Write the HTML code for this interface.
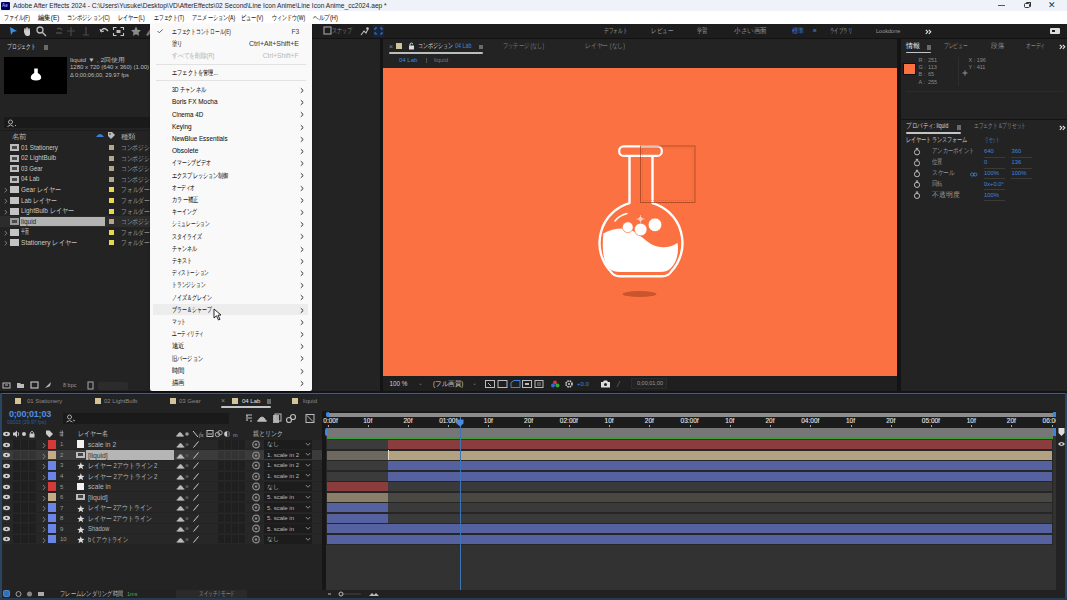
<!DOCTYPE html>
<html><head><meta charset="utf-8">
<style>
*{margin:0;padding:0;box-sizing:border-box}
html,body{width:1067px;height:600px;overflow:hidden;background:#121212;font-family:"Liberation Sans",sans-serif;font-size:7px;color:#a8a8a8}
.a{position:absolute}
.t{position:absolute;white-space:nowrap;line-height:1}
.panel{position:absolute;background:#232323}
.mb{position:absolute;white-space:nowrap;line-height:1;top:3px;font-size:7px;color:#111;-webkit-text-stroke:0.05px currentColor}
.ws{position:absolute;white-space:nowrap;line-height:1;top:4px;font-size:6.5px;color:#9a9a9a}
.mi{position:absolute;white-space:nowrap;line-height:1;left:21.5px;font-size:6.8px;color:#111;-webkit-text-stroke:0.05px currentColor}
.ar{position:absolute;left:150px;width:4px;height:7px}
.pr{position:absolute;white-space:nowrap;line-height:1;font-size:7.4px;color:#cacaca;margin-top:-0.4px}
.pt{position:absolute;white-space:nowrap;line-height:1;font-size:7px;color:#9a9a9a}
.lbl{position:absolute;width:5px;height:5px}
</style></head><body>
<!-- ================= title bar ================= -->
<div class="a" style="left:0;top:0;width:1067px;height:11px;background:#eff2f8">
  <div class="a" style="left:1px;top:2px;width:9px;height:8px;background:#00005b;border-radius:1px"></div>
  <div class="t" style="left:2px;top:4px;font-size:4.5px;color:#9999ff;font-weight:bold">Ae</div>
  <div class="t" style="left:13px;top:2px;font-size:7px;color:#1f1f1f;--w:374;transform:scaleX(0.942);transform-origin:0 0">Adobe After Effects 2024 - C:\Users\Yusuke\Desktop\VD\AfterEffects\02 Second\Line Icon Anime\Line Icon Anime_cc2024.aep *</div>
  <div class="a" style="left:998px;top:5px;width:7px;height:1px;background:#555"></div>
  <div class="a" style="left:1024px;top:2.5px;width:5.5px;height:5.5px;border:1px solid #333;border-radius:1.5px"></div><div class="a" style="left:1025.5px;top:1.5px;width:5px;height:5px;border-top:1px solid #333;border-right:1px solid #333;border-radius:1px"></div>
  <div class="t" style="left:1048px;top:1px;font-size:9px;color:#333">✕</div>
</div>
<!-- ================= menu bar ================= -->
<div class="a" style="left:0;top:11px;width:1067px;height:13px;background:#ffffff">
  <div class="mb" style="left:4px;--w:26;transform:scaleX(0.703);transform-origin:0 0">ファイル(F)</div>
  <div class="mb" style="left:38px;--w:21;transform:scaleX(0.913);transform-origin:0 0">編集(E)</div>
  <div class="mb" style="left:67px;--w:43;transform:scaleX(0.729);transform-origin:0 0">コンポジション(C)</div>
  <div class="mb" style="left:118px;--w:27;transform:scaleX(0.73);transform-origin:0 0">レイヤー(L)</div>
  <div class="mb" style="left:154px;--w:30;transform:scaleX(0.682);transform-origin:0 0">エフェクト(T)</div>
  <div class="mb" style="left:192px;--w:43;transform:scaleX(0.741);transform-origin:0 0">アニメーション(A)</div>
  <div class="mb" style="left:241px;--w:22;transform:scaleX(0.733);transform-origin:0 0">ビュー(V)</div>
  <div class="mb" style="left:272px;--w:33;transform:scaleX(0.717);transform-origin:0 0">ウィンドウ(W)</div>
  <div class="mb" style="left:313px;--w:25;transform:scaleX(0.806);transform-origin:0 0">ヘルプ(H)</div>
</div>
<!-- ================= toolbar ================= -->
<div class="a" style="left:0;top:24px;width:1067px;height:14px;background:#1d1d1d">
  <svg class="a" style="left:0;top:0" width="400" height="14">
    <path d="M10 3 L17 7 L13 8 L11 11 Z" fill="#3d8ee8"/>
    <path d="M24 8 q0-4 1-4 q1 0 1 3 q0-4 1-4 q1 0 1 4 q0-3 1-3 q1 0 1 3 v3 q0 2-3 2 q-2 0-3-4z" fill="#cfcfcf"/>
    <circle cx="40" cy="6" r="3" stroke="#bbb" stroke-width="1.3" fill="none"/><path d="M42 8 L46 12" stroke="#bbb" stroke-width="1.5"/>
    <path d="M56 9 h6 M57 5 q3-2 5 1" stroke="#4a4a4a" stroke-width="1.5" fill="none"/>
    <path d="M71 3 v9 M67 7 h8" stroke="#4a4a4a" stroke-width="1.2"/>
    <path d="M86 3 v8 M83 11 h6" stroke="#4a4a4a" stroke-width="1.2"/>
    <path d="M101 7 q3-5 7 0" stroke="#c8c8c8" stroke-width="1.4" fill="none"/><path d="M100 5 l1 3 l3-1" stroke="#c8c8c8" stroke-width="1" fill="none"/>
    <path d="M113.5 6 v-2.5 h3 M120.5 3.5 h3 v2.5 M113.5 9 v2.5 h3 M120.5 11.5 h3 v-2.5" stroke="#c8c8c8" stroke-width="1.1" fill="none"/><rect x="116.5" y="6" width="4" height="3" fill="#bbb"/>
    <path d="M136 2.5 l1.6 3.2 l3.4 0.5 l-2.5 2.3 l0.6 3.3 l-3.1-1.6 l-3.1 1.6 l0.6-3.3 l-2.5-2.3 l3.4-0.5z" fill="#8a8a8a"/>
    <path d="M146 11 l4-6 l2 2 l-4 5z" fill="#777"/>
    <rect x="324" y="3" width="7" height="7" fill="none" stroke="#9a9a9a" stroke-width="1.2"/>
    <path d="M361 11 l3-4 l2 2 l2-4" stroke="#bbb" stroke-width="1.1" fill="none"/><circle cx="367.5" cy="4.5" r="1.3" fill="#ccc"/>
    <rect x="373" y="1" width="11" height="12" fill="#18243a"/><path d="M375 4 h2 M375 4 v2 M382 4 h-2 M382 4 v2 M375 10 h2 M375 10 v-2 M382 10 h-2 M382 10 v-2" stroke="#3c7ad0" stroke-width="1"/>
  </svg>
  <div class="t" style="left:332px;top:4px;font-size:6.5px;color:#8a8a8a;--w:20;transform:scaleX(0.714);transform-origin:0 0">スナップ</div>
  <div class="ws" style="left:603.5px;--w:23.5;transform:scaleX(0.671);transform-origin:0 0">デフォルト</div>
  <div class="ws" style="left:651px;--w:22;transform:scaleX(0.786);transform-origin:0 0">レビュー</div>
  <div class="ws" style="left:696.5px;--w:10.5;transform:scaleX(0.75);transform-origin:0 0">学習</div>
  <div class="ws" style="left:733.5px;--w:32.5;transform:scaleX(0.929);transform-origin:0 0">小さい画面</div>
  <div class="ws" style="left:792px;color:#3e86dc;--w:12;transform:scaleX(0.857);transform-origin:0 0">標準</div>
  <div class="ws" style="left:813px;color:#3e86dc">≡</div>
  <div class="ws" style="left:830px;--w:22;transform:scaleX(0.629);transform-origin:0 0">ライブラリ</div>
  <div class="ws" style="left:876px;font-size:6px;--w:24;transform:scaleX(0.923);transform-origin:0 0">Lookdone</div>
  <svg class="a" style="left:924.5px;top:4.5px" width="7" height="6"><path d="M0.8 0.8 L2.8 2.8 L0.8 4.8 M3.8 0.8 L5.8 2.8 L3.8 4.8" fill="none" stroke="#e6e6e6" stroke-width="1.1"/></svg>
  <div class="a" style="left:1050px;top:4px;width:10px;height:6px;background:#ddd;border-radius:1px"></div>
  <div class="a" style="left:1052px;top:6px;width:3px;height:2px;background:#1d1d1d"></div>
</div>
<!-- ================= project panel ================= -->
<div class="panel" style="left:0;top:39px;width:380px;height:352px">
  <div class="t" style="left:7px;top:4px;font-size:7px;color:#dadada;--w:29;transform:scaleX(0.69);transform-origin:0 0">プロジェクト</div>
  <div class="a" style="left:43.5px;top:6px;width:4.5px;height:4.5px;background:#6a6a6a"></div>
  <div class="a" style="left:4px;top:18px;width:63px;height:37px;background:#000"></div>
  <svg class="a" style="left:30px;top:28px" width="12" height="15"><path d="M5.2 1.5 h2.6 v4.5 q3.4 1.6 3.4 4.6 q0 3-5.2 3 q-5.2 0-5.2-3 q0-3 3.4-4.6 v-4.5z" fill="#fff"/></svg>
  <div class="t" style="left:70px;top:18px;font-size:6px;color:#bdbdbd;--w:55;transform:scaleX(1.146);transform-origin:0 0">liquid ▼ , 2回使用</div>
  <div class="t" style="left:70px;top:25px;font-size:6px;color:#bdbdbd">1280 x 720 (640 x 360) (1.00)</div>
  <div class="t" style="left:70px;top:33px;font-size:6px;color:#bdbdbd;--w:59;transform:scaleX(0.952);transform-origin:0 0">Δ 0;00;06;00, 29.97 fps</div>
  <div class="a" style="left:4px;top:78px;width:146px;height:11px;background:#1a1a1a"></div>
  <svg class="a" style="left:7px;top:80px" width="10" height="8"><circle cx="3.5" cy="3" r="2" fill="none" stroke="#aaa" stroke-width="1"/><path d="M0.5 7.5 q3-3 6 0" fill="none" stroke="#aaa" stroke-width="1"/><path d="M8 6 l1 1" stroke="#aaa"/></svg>
  <div class="a" style="left:0;top:91px;width:150px;height:1px;background:#1c1c1c"></div>
  <div class="t" style="left:12px;top:94px;font-size:7px;color:#b8b8b8;--w:15;transform:scaleX(1.071);transform-origin:0 0">名前</div>
  <svg class="a" style="left:96px;top:93px" width="8" height="6"><path d="M0 5 q4-6 8 0z" fill="#3a80d8"/></svg>
  <svg class="a" style="left:107px;top:92px" width="9" height="9"><path d="M1 1 h4 l3 3 l-4 4 l-3-3z" fill="#bbb"/><circle cx="3" cy="3" r="0.8" fill="#232323"/></svg>
  <div class="t" style="left:121px;top:94px;font-size:7px;color:#b8b8b8;--w:15;transform:scaleX(1.071);transform-origin:0 0">種類</div>
</div>
<div class="a" style="left:380px;top:39px;width:3px;height:352px;background:#141414"></div>
<!-- project rows -->
<div class="a" style="left:0;top:143px;width:150px;height:110px">
  <!-- row pitch 10.6 -->
  <div class="a" style="left:10px;top:1px;width:9px;height:7px;background:#bdbdbd"></div><div class="a" style="left:12px;top:3px;width:5px;height:3px;background:#4b4b4b"></div>
  <div class="pr" style="left:21px;top:1px;--w:37.3;transform:scaleX(0.848);transform-origin:0 0">01 Stationery</div>
  <div class="lbl" style="left:109px;top:2px;background:#b8a488"></div><div class="pt" style="left:121px;top:1px;--w:40;transform:scaleX(0.816);transform-origin:0 0">コンポジション</div>

  <div class="a" style="left:10px;top:11.6px;width:9px;height:7px;background:#bdbdbd"></div><div class="a" style="left:12px;top:13.6px;width:5px;height:3px;background:#4b4b4b"></div>
  <div class="pr" style="left:21px;top:11.6px;--w:35.0;transform:scaleX(0.854);transform-origin:0 0">02 LightBulb</div>
  <div class="lbl" style="left:109px;top:12.6px;background:#b8a488"></div><div class="pt" style="left:121px;top:11.6px;--w:40;transform:scaleX(0.816);transform-origin:0 0">コンポジション</div>

  <div class="a" style="left:10px;top:22.2px;width:9px;height:7px;background:#bdbdbd"></div><div class="a" style="left:12px;top:24.2px;width:5px;height:3px;background:#4b4b4b"></div>
  <div class="pr" style="left:21px;top:22.2px;--w:21.7;transform:scaleX(0.804);transform-origin:0 0">03 Gear</div>
  <div class="lbl" style="left:109px;top:23.2px;background:#b8a488"></div><div class="pt" style="left:121px;top:22.2px;--w:40;transform:scaleX(0.816);transform-origin:0 0">コンポジション</div>

  <div class="a" style="left:10px;top:32.8px;width:9px;height:7px;background:#bdbdbd"></div><div class="a" style="left:12px;top:34.8px;width:5px;height:3px;background:#4b4b4b"></div>
  <div class="pr" style="left:21px;top:32.8px;--w:18.6;transform:scaleX(0.809);transform-origin:0 0">04 Lab</div>
  <div class="lbl" style="left:109px;top:33.8px;background:#b8a488"></div><div class="pt" style="left:121px;top:32.8px;--w:40;transform:scaleX(0.816);transform-origin:0 0">コンポジション</div>

  <svg class="a" style="left:3.5px;top:44.4px" width="4" height="7"><path d="M0.8 1 L2.8 3.2 L0.8 5.4" fill="none" stroke="#8a8a8a" stroke-width="0.9"/></svg>
  <div class="a" style="left:10px;top:43.4px;width:9px;height:7px;background:#c4c4c4"></div>
  <div class="pr" style="left:21px;top:43.4px;--w:40.0;transform:scaleX(0.87);transform-origin:0 0">Gear レイヤー</div>
  <div class="lbl" style="left:109px;top:44.4px;background:#e8d84a"></div><div class="pt" style="left:121px;top:43.4px;--w:29;transform:scaleX(0.829);transform-origin:0 0">フォルダー</div>

  <svg class="a" style="left:3.5px;top:55.0px" width="4" height="7"><path d="M0.8 1 L2.8 3.2 L0.8 5.4" fill="none" stroke="#8a8a8a" stroke-width="0.9"/></svg>
  <div class="a" style="left:10px;top:54px;width:9px;height:7px;background:#c4c4c4"></div>
  <div class="pr" style="left:21px;top:54px;--w:35.4;transform:scaleX(0.843);transform-origin:0 0">Lab レイヤー</div>
  <div class="lbl" style="left:109px;top:55px;background:#e8d84a"></div><div class="pt" style="left:121px;top:54px;--w:29;transform:scaleX(0.829);transform-origin:0 0">フォルダー</div>

  <svg class="a" style="left:3.5px;top:65.6px" width="4" height="7"><path d="M0.8 1 L2.8 3.2 L0.8 5.4" fill="none" stroke="#8a8a8a" stroke-width="0.9"/></svg>
  <div class="a" style="left:10px;top:64.6px;width:9px;height:7px;background:#c4c4c4"></div>
  <div class="pr" style="left:21px;top:64.6px;--w:53.0;transform:scaleX(0.869);transform-origin:0 0">LightBulb レイヤー</div>
  <div class="lbl" style="left:109px;top:65.6px;background:#e8d84a"></div><div class="pt" style="left:121px;top:64.6px;--w:29;transform:scaleX(0.829);transform-origin:0 0">フォルダー</div>

  <div class="a" style="left:0;top:73.2px;width:150px;height:10.6px;background:#2c2c2c"></div>
  <div class="a" style="left:20px;top:73.5px;width:85px;height:9.5px;background:#b3b3b3"></div>
  <div class="a" style="left:10px;top:75.2px;width:9px;height:7px;background:#9a9a9a"></div><div class="a" style="left:12px;top:77.2px;width:5px;height:3px;background:#4b4b4b"></div>
  <div class="pr" style="left:21px;top:75.2px;color:#222;--w:15.0;transform:scaleX(0.882);transform-origin:0 0">liquid</div>
  <div class="lbl" style="left:109px;top:76.2px;background:#b8a488"></div><div class="pt" style="left:121px;top:75.2px;--w:40;transform:scaleX(0.816);transform-origin:0 0">コンポジション</div>

  <svg class="a" style="left:3.5px;top:86.8px" width="4" height="7"><path d="M0.8 1 L2.8 3.2 L0.8 5.4" fill="none" stroke="#8a8a8a" stroke-width="0.9"/></svg>
  <div class="a" style="left:10px;top:85.8px;width:9px;height:7px;background:#c4c4c4"></div>
  <div class="pr" style="left:21px;top:85.8px;--w:7.7;transform:scaleX(0.55);transform-origin:0 0">平面</div>
  <div class="lbl" style="left:109px;top:86.8px;background:#e8d84a"></div><div class="pt" style="left:121px;top:85.8px;--w:29;transform:scaleX(0.829);transform-origin:0 0">フォルダー</div>

  <svg class="a" style="left:3.5px;top:97.4px" width="4" height="7"><path d="M0.8 1 L2.8 3.2 L0.8 5.4" fill="none" stroke="#8a8a8a" stroke-width="0.9"/></svg>
  <div class="a" style="left:10px;top:96.4px;width:9px;height:7px;background:#c4c4c4"></div>
  <div class="pr" style="left:21px;top:96.4px;--w:56.0;transform:scaleX(0.889);transform-origin:0 0">Stationery レイヤー</div>
  <div class="lbl" style="left:109px;top:97.4px;background:#e8d84a"></div><div class="pt" style="left:121px;top:96.4px;--w:29;transform:scaleX(0.829);transform-origin:0 0">フォルダー</div>
</div>
<!-- project footer -->
<div class="a" style="left:0;top:380px;width:150px;height:11px">
  <svg class="a" style="left:0;top:0" width="150" height="11">
    <rect x="3" y="3" width="7" height="5" fill="none" stroke="#bbb" stroke-width="1"/><path d="M5 5 h3" stroke="#bbb"/>
    <path d="M17 3 h3 l1 1 h3 v4 h-7z" fill="#bbb"/>
    <rect x="31" y="2" width="7" height="6" fill="none" stroke="#bbb" stroke-width="1.2"/>
    <path d="M45 8 l6-6 l-1 4 l-2 1z" fill="#bbb"/>
    <rect x="88" y="2" width="5" height="7" fill="none" stroke="#aaa" stroke-width="1"/>
    <rect x="98" y="2" width="30" height="8" rx="2" fill="#2c2c2c"/>
  </svg>
  <div class="t" style="left:63px;top:3px;font-size:5.5px;color:#999">8 bpc</div>
</div>
<!-- ================= comp panel ================= -->
<div class="panel" style="left:383px;top:39px;width:515px;height:352px">
  <div class="t" style="left:6px;top:4px;font-size:7px;color:#888">×</div>
  <div class="a" style="left:13px;top:4px;width:6px;height:6px;background:#cfc49a"></div>
  <svg class="a" style="left:25px;top:3px" width="7" height="8"><rect x="1" y="3.5" width="5" height="4" fill="#ddd"/><path d="M2 3.5 v-1.5 q1.5-2 3 0" fill="none" stroke="#ddd" stroke-width="1"/></svg>
  <div class="t" style="left:35px;top:4px;font-size:6.8px;color:#d8d8d8;--w:35;transform:scaleX(0.714);transform-origin:0 0">コンポジション</div>
  <div class="t" style="left:72px;top:4px;font-size:6.5px;color:#3e86dc;--w:16.5;transform:scaleX(0.825);transform-origin:0 0">04 Lab</div>
  <div class="a" style="left:96px;top:6px;width:4px;height:4px;background:#6a6a6a"></div>
  <div class="a" style="left:6px;top:13px;width:94px;height:2px;background:#bdbdbd;border-radius:1px"></div>
  <div class="t" style="left:120px;top:4px;font-size:6.5px;color:#7a7a7a;--w:41;transform:scaleX(0.745);transform-origin:0 0">フッテージ (なし)</div>
  <div class="t" style="left:202px;top:4px;font-size:6.5px;color:#7a7a7a;--w:40;transform:scaleX(0.833);transform-origin:0 0">レイヤー (なし)</div>
  
  <div class="t" style="left:16px;top:18px;font-size:6px;color:#3e86dc">04 Lab</div>
  <div class="a" style="left:42.5px;top:18.5px;width:1px;height:5px;background:#555"></div>
  <div class="t" style="left:51px;top:18px;font-size:6px;color:#777">liquid</div>
</div>
<div class="a" style="left:383px;top:68px;width:514px;height:308px;background:#fb7141">
  <svg class="a" style="left:0;top:0" width="514" height="308" viewBox="383 68 514 308">
    <!-- shadow -->
    <ellipse cx="639.5" cy="294" rx="17" ry="3" fill="#c9552a"/>
    <!-- liquid -->
    <path d="M603.3 233.5 C609 230 617 228 625 228.5 C635 229.5 642 238 651 244 C660 249 670 248 677.5 243 C679 252 677 262 671 268 C668 271 664 272 660 272 H620 C616 272 612 271 609 268 C603 262 602 250 603.3 233.5 Z" fill="#fff"/>
    <!-- bubbles -->
    <circle cx="627.8" cy="227.2" r="5.4" fill="#fff" stroke="#fb7141" stroke-width="0.7"/>
    <circle cx="655" cy="224.8" r="6.8" fill="#fff" stroke="#fb7141" stroke-width="0.7"/>
    <circle cx="640.7" cy="229.5" r="6.3" fill="#fff" stroke="#fb7141" stroke-width="0.7"/>
    <!-- anchor -->
    <circle cx="640.5" cy="219" r="1.6" fill="none" stroke="#fff" stroke-width="0.8"/>
    <path d="M640.5 215 v8 M636.5 219 h8" stroke="#fff" stroke-width="0.5"/>
    <!-- highlight arc -->
    <path d="M615 221 Q619 215.5 627 213.5" fill="none" stroke="#fff" stroke-width="1.5" stroke-linecap="round"/>
    <!-- flask outline -->
    <path d="M629.5 156.5 V203.1 A41.6 41.6 0 0 0 610.3 271 Q613.5 276.3 620 276.3 H662 Q668.5 276.3 671.7 271 A41.6 41.6 0 0 0 652.5 203.1 V156.5" fill="none" stroke="#fff" stroke-width="2.4" stroke-linejoin="round"/>
    <rect x="619.2" y="146.3" width="42.6" height="9.6" rx="4.5" fill="none" stroke="#fff" stroke-width="2.2"/>
    <!-- bounding box overlay -->
    <rect x="640.5" y="146" width="54.5" height="56.5" fill="none" stroke="#8a3618" stroke-width="0.7" opacity="0.85"/>
    <rect x="642.5" y="148" width="50.5" height="52.5" fill="none" stroke="#b0502c" stroke-width="0.5" stroke-dasharray="1 1" opacity="0.7"/>
  </svg>
</div>
<!-- comp footer -->
<div class="a" style="left:383px;top:376px;width:515px;height:15px;background:#1f1f1f">
  <div class="t" style="left:6.5px;top:5px;font-size:6.3px;color:#d0d0d0">100 %</div>
  <div class="t" style="left:35px;top:4px;font-size:6px;color:#777">⌄</div>
  <div class="t" style="left:50px;top:5px;font-size:6.5px;color:#d0d0d0;--w:30;transform:scaleX(0.938);transform-origin:0 0">(フル画質)</div>
  <div class="t" style="left:89px;top:4px;font-size:6px;color:#777">⌄</div>
  <svg class="a" style="left:0;top:0" width="300" height="15">
    <rect x="102.5" y="4.5" width="9" height="7" fill="none" stroke="#bbb" stroke-width="1"/><path d="M105 7 l3 3" stroke="#bbb"/>
    <rect x="115" y="4.5" width="9" height="7" fill="none" stroke="#bbb" stroke-width="1"/>
    <path d="M128 11.5 v-5 l3-2 h6 v7z" fill="none" stroke="#3e86dc" stroke-width="1"/>
    <rect x="139.5" y="4.5" width="9" height="7" fill="none" stroke="#bbb" stroke-width="1"/><rect x="142" y="7" width="4" height="2" fill="#bbb"/>
    <rect x="152" y="4.5" width="8" height="7" fill="none" stroke="#bbb" stroke-width="1"/><path d="M154 7 h4 M154 9 h4" stroke="#bbb" stroke-width="0.7"/>
    <circle cx="172" cy="6.5" r="2" fill="#d33"/><circle cx="174.5" cy="9.5" r="2" fill="#3a3"/><circle cx="170" cy="9.5" r="2" fill="#36d"/>
    <circle cx="186" cy="8" r="3" fill="none" stroke="#ccc" stroke-width="1.6" stroke-dasharray="1.6 0.8"/><circle cx="186" cy="8" r="1" fill="#ccc"/>
    <path d="M218 6 h2 l1-1.5 h3 l1 1.5 h2 v5.5 h-9z" fill="#ddd"/><circle cx="222.5" cy="8.5" r="1.5" fill="#1f1f1f"/>
    <path d="M234 11 l3-6" stroke="#555" stroke-width="1"/>
  </svg>
  <div class="t" style="left:194px;top:5px;font-size:6px;color:#3e86dc">+0.0</div>
  <div class="a" style="left:248px;top:2px;width:36px;height:11px;background:#232323;border:1px solid #2c2c2c"></div>
  <div class="t" style="left:254px;top:5px;font-size:5.5px;color:#999">0;00;01;00</div>
</div>
<div class="a" style="left:897px;top:39px;width:4px;height:352px;background:#141414"></div>
<!-- ================= right panels ================= -->
<div class="panel" style="left:901px;top:39px;width:166px;height:80px">
  <div class="t" style="left:5px;top:4px;font-size:6.8px;color:#e8e8e8;--w:14;transform:scaleX(1);transform-origin:0 0">情報</div>
  <div class="a" style="left:25.5px;top:6px;width:4.5px;height:4.5px;background:#6a6a6a"></div>
  <div class="a" style="left:5px;top:12.5px;width:25px;height:1.6px;background:#c4c4c4;border-radius:1px"></div>
  <div class="t" style="left:43px;top:4px;font-size:6.5px;color:#8a8a8a;--w:23.5;transform:scaleX(0.671);transform-origin:0 0">プレビュー</div>
  <div class="t" style="left:90px;top:4px;font-size:6.5px;color:#8a8a8a;--w:13;transform:scaleX(0.929);transform-origin:0 0">段落</div>
  <div class="t" style="left:125px;top:4px;font-size:6.5px;color:#8a8a8a;--w:19;transform:scaleX(0.679);transform-origin:0 0">オーディ</div>
  <svg class="a" style="left:157.5px;top:5px" width="7" height="6"><path d="M0.8 0.8 L2.8 2.8 L0.8 4.8 M3.8 0.8 L5.8 2.8 L3.8 4.8" fill="none" stroke="#e6e6e6" stroke-width="1.1"/></svg>
  <div class="a" style="left:3px;top:24.5px;width:11px;height:10.5px;background:#fb7141;box-shadow:0 0 0 1px #111"></div>
  <div class="t" style="left:17.5px;top:18px;font-size:5.5px;color:#8a8a8a;line-height:7.2px;white-space:pre">R :
G :
B :
A :</div>
  <div class="t" style="left:27px;top:18px;font-size:5.5px;color:#8a8a8a;line-height:7.2px;white-space:pre">251
113
65
255</div>
  <div class="a" style="left:57px;top:18px;width:1px;height:29px;background:#2e2e2e"></div>
  <div class="t" style="left:67.5px;top:18px;font-size:5.5px;color:#8a8a8a;line-height:7.2px;white-space:pre">X : 196
Y : 411</div>
  <svg class="a" style="left:61px;top:31px" width="6" height="6"><path d="M3 0.5 v5 M0.5 3 h5" stroke="#aaa" stroke-width="0.8"/></svg>
  <div class="a" style="left:5px;top:51.5px;width:157px;height:1px;background:#2c2c2c"></div>
</div>
<div class="a" style="left:901px;top:119px;width:166px;height:1px;background:#141414"></div>
<div class="panel" style="left:901px;top:120px;width:166px;height:271px">
  <div class="t" style="left:5px;top:3px;font-size:6.5px;color:#d8d8d8;--w:42.5;transform:scaleX(0.787);transform-origin:0 0">プロパティ: liquid</div>
  <div class="a" style="left:55.5px;top:5px;width:4.5px;height:4.5px;background:#6a6a6a"></div>
  <div class="a" style="left:5px;top:12px;width:55px;height:1.6px;background:#c4c4c4;border-radius:1px"></div>
  <div class="t" style="left:73px;top:3px;font-size:6.5px;color:#8a8a8a;--w:52;transform:scaleX(0.675);transform-origin:0 0">エフェクト＆プリセット</div>
  <svg class="a" style="left:157.5px;top:4.5px" width="7" height="6"><path d="M0.8 0.8 L2.8 2.8 L0.8 4.8 M3.8 0.8 L5.8 2.8 L3.8 4.8" fill="none" stroke="#e6e6e6" stroke-width="1.1"/></svg>
  <div class="t" style="left:5px;top:17px;font-size:6.8px;color:#cfcfcf;--w:61.5;transform:scaleX(0.732);transform-origin:0 0">レイヤートランスフォーム</div>
  <div class="t" style="left:83.5px;top:17px;font-size:6.5px;color:#3e86dc;--w:14.5;transform:scaleX(0.518);transform-origin:0 0">リセット</div>
  <svg class="a" style="left:0;top:0" width="30" height="90">
    <g fill="none" stroke="#c8c8c8" stroke-width="0.9">
      <circle cx="16" cy="32.3" r="2.6"/><path d="M16 29.7 v-1.2 M14.8 28.4 h2.4"/>
      <circle cx="16" cy="43.3" r="2.6"/><path d="M16 40.7 v-1.2 M14.8 39.4 h2.4"/>
      <circle cx="16" cy="54.2" r="2.6"/><path d="M16 51.6 v-1.2 M14.8 50.3 h2.4"/>
      <circle cx="16" cy="64.9" r="2.6"/><path d="M16 62.3 v-1.2 M14.8 61 h2.4"/>
      <circle cx="16" cy="75.9" r="2.6"/><path d="M16 73.3 v-1.2 M14.8 72 h2.4"/>
    </g>
  </svg>
  <div class="t" style="left:31px;top:28.3px;font-size:6.5px;color:#9a9a9a;--w:42;transform:scaleX(0.75);transform-origin:0 0">アンカーポイント</div>
  <div class="t" style="left:31px;top:39.3px;font-size:6.5px;color:#9a9a9a;--w:10.5;transform:scaleX(0.75);transform-origin:0 0">位置</div>
  <div class="t" style="left:31px;top:50.2px;font-size:6.5px;color:#9a9a9a;--w:23;transform:scaleX(0.821);transform-origin:0 0">スケール</div>
  <div class="t" style="left:31px;top:60.9px;font-size:6.5px;color:#9a9a9a;--w:10.5;transform:scaleX(0.75);transform-origin:0 0">回転</div>
  <div class="t" style="left:31px;top:71.9px;font-size:6.5px;color:#9a9a9a;--w:27.5;transform:scaleX(0.982);transform-origin:0 0">不透明度</div>
  <div class="t" style="left:83px;top:29px;font-size:5.8px;color:#3e86dc">640</div>
  <div class="t" style="left:83px;top:40px;font-size:5.8px;color:#3e86dc">0</div>
  <div class="t" style="left:83px;top:50.8px;font-size:5.8px;color:#3e86dc">100%</div>
  <div class="t" style="left:83px;top:61.5px;font-size:5.8px;color:#3e86dc">0x+0.0°</div>
  <div class="t" style="left:83px;top:72.5px;font-size:5.8px;color:#3e86dc">100%</div>
  <div class="t" style="left:110.5px;top:29px;font-size:5.8px;color:#3e86dc">360</div>
  <div class="t" style="left:110.5px;top:40px;font-size:5.8px;color:#3e86dc">136</div>
  <div class="t" style="left:110.5px;top:50.8px;font-size:5.8px;color:#3e86dc">100%</div>
  <svg class="a" style="left:69px;top:51.5px" width="8" height="5"><rect x="0.5" y="1" width="3.5" height="3" rx="1.5" fill="none" stroke="#3e86dc" stroke-width="0.8"/><rect x="3.5" y="1" width="3.5" height="3" rx="1.5" fill="none" stroke="#3e86dc" stroke-width="0.8"/></svg>
  <div class="a" style="left:83px;top:36.5px;width:21px;height:1px;background:#3a3a3a"></div><div class="a" style="left:110px;top:36.5px;width:21px;height:1px;background:#3a3a3a"></div>
  <div class="a" style="left:83px;top:47.5px;width:21px;height:1px;background:#3a3a3a"></div><div class="a" style="left:110px;top:47.5px;width:21px;height:1px;background:#3a3a3a"></div>
  <div class="a" style="left:83px;top:58.3px;width:21px;height:1px;background:#3a3a3a"></div><div class="a" style="left:110px;top:58.3px;width:21px;height:1px;background:#3a3a3a"></div>
  <div class="a" style="left:83px;top:69px;width:21px;height:1px;background:#3a3a3a"></div>
  <div class="a" style="left:83px;top:80px;width:21px;height:1px;background:#3a3a3a"></div>
</div>
<!-- ================= timeline ================= -->
<div class="a" style="left:0;top:391px;width:1067px;height:2px;background:#141414"></div>
<div class="a" style="left:0;top:393px;width:1067px;height:207px;background:#232323"></div>
<div class="a" style="left:0;top:392.5px;width:1067px;height:1.5px;background:#4a5f76"></div><div class="a" style="left:0;top:394px;width:1067px;height:1.2px;background:#182030"></div>
<div class="a" style="left:0;top:393px;width:1.5px;height:207px;background:#2a4562"></div>
<div class="a" style="left:1065px;top:393px;width:2px;height:207px;background:#2a4562"></div>
<div class="a" style="left:0;top:598px;width:1067px;height:2px;background:#263b52"></div>
<div class="a" style="left:15px;top:398px;width:6px;height:6px;background:#d4c49a"></div>
<div class="t" style="left:27px;top:398px;font-size:6px;color:#8a8a8a">01 Stationery</div>
<div class="a" style="left:95px;top:398px;width:6px;height:6px;background:#d4c49a"></div>
<div class="t" style="left:104px;top:398px;font-size:6px;color:#8a8a8a">02 LightBulb</div>
<div class="a" style="left:170px;top:398px;width:6px;height:6px;background:#d4c49a"></div>
<div class="t" style="left:179px;top:398px;font-size:6px;color:#8a8a8a">03 Gear</div>
<div class="a" style="left:232px;top:398px;width:6px;height:6px;background:#d4c49a"></div>
<div class="t" style="left:242px;top:398px;font-size:6px;color:#e0e0e0">04 Lab</div>
<div class="a" style="left:292px;top:398px;width:6px;height:6px;background:#d4c49a"></div>
<div class="t" style="left:303px;top:398px;font-size:6px;color:#8a8a8a">liquid</div>
<div class="t" style="left:221px;top:397px;font-size:7px;color:#888">×</div>
<div class="a" style="left:266.5px;top:399px;width:4.5px;height:4.5px;background:#6a6a6a"></div>
<div class="a" style="left:221px;top:406px;width:49.5px;height:1.8px;background:#c4c4c4;border-radius:1px"></div>
<div class="t" style="left:9px;top:410px;font-size:9px;color:#4f8fe0;font-weight:bold;letter-spacing:-0.2px">0;00;01;03</div>
<div class="t" style="left:7px;top:420px;font-size:5px;color:#2f5f9a">00033 (29.97 fps)</div>
<div class="a" style="left:63px;top:413px;width:166px;height:11px;background:#1a1a1a"></div>
<svg class="a" style="left:66px;top:414px" width="10" height="9"><circle cx="3.5" cy="3" r="2" fill="none" stroke="#aaa" stroke-width="1"/><path d="M0.5 8 q3-3 6 0" fill="none" stroke="#aaa" stroke-width="1"/><path d="M7 6 l2 1" stroke="#aaa"/></svg>
<svg class="a" style="left:240px;top:412px" width="80" height="13">
<path d="M6 3 h6 M8 6 h4 M10 9 h2 M7 3 v6" stroke="#bbb" stroke-width="1.2" fill="none"/>
<path d="M18 9 q4-8 8 0z M17 9 h10 M19 7 h6" stroke="#bbb" stroke-width="1" fill="#bbb"/>
<rect x="33" y="3" width="6" height="8" fill="#aaa"/><rect x="35" y="2" width="6" height="7" fill="none" stroke="#bbb"/>
<circle cx="49" cy="8" r="2.5" fill="none" stroke="#bbb" stroke-width="1.2"/><circle cx="53" cy="5" r="2.5" fill="none" stroke="#bbb" stroke-width="1.2"/>
<rect x="66" y="2.5" width="8" height="8" fill="none" stroke="#bbb" stroke-width="1"/><path d="M67 3.5 l6 6" stroke="#bbb"/>
</svg>
<svg class="a" style="left:0;top:429px" width="70" height="10">
<ellipse cx="6.5" cy="5" rx="3.5" ry="2.2" fill="#ccc"/><circle cx="6.5" cy="5" r="1" fill="#232323"/>
<path d="M13 3.5 h2 l2-2 v7 l-2-2 h-2z" fill="#ccc"/><path d="M18 3 q1.5 2 0 4" stroke="#ccc" fill="none" stroke-width="0.8"/>
<circle cx="24" cy="5" r="2" fill="#ccc"/>
<rect x="29.5" y="4.5" width="5" height="4" fill="#ccc"/><path d="M30.5 4.5 v-1 q1.5-2.5 3 0 v1" stroke="#ccc" fill="none" stroke-width="0.9"/>
<path d="M46 1.5 h3.5 l3.5 3.5 l-3.5 3.5 l-3.5-3.5z" fill="#ccc"/>
<path d="M59.5 3.5 h4 M59.5 6 h4 M61 1.5 v6 M62.5 1.5 v6" stroke="#999" stroke-width="0.7"/>
</svg>
<div class="t" style="left:78px;top:430px;font-size:7px;color:#c0c0c0;--w:30;transform:scaleX(0.857);transform-origin:0 0">レイヤー名</div>
<svg class="a" style="left:174px;top:429px" width="75" height="10">
<path d="M3 7 q3-7 6 0z M2 7 h8" stroke="#bbb" fill="#bbb" stroke-width="0.8"/>
<circle cx="13" cy="5" r="1.8" fill="#999"/>
<path d="M19 2 l5 6" stroke="#ccc" stroke-width="1"/>
<text x="25" y="8" font-size="6" fill="#bbb" font-style="italic" font-family="Liberation Serif">fx</text>
<rect x="33" y="1.5" width="6" height="6" fill="none" stroke="#bbb"/><path d="M34 5 h4" stroke="#bbb"/>
<circle cx="43.5" cy="5.5" r="2.2" fill="none" stroke="#aaa"/><circle cx="46" cy="3.8" r="2.2" fill="none" stroke="#aaa"/>
<circle cx="53" cy="5" r="2.8" fill="#ccc"/><path d="M53 2.2 a2.8 2.8 0 0 1 0 5.6z" fill="#444"/>
<text x="59" y="8" font-size="5.5" fill="#999" font-family="Liberation Sans">m</text>
</svg>
<div class="t" style="left:253px;top:430px;font-size:7px;color:#c0c0c0;--w:30;transform:scaleX(0.857);transform-origin:0 0">親とリンク</div>
<div class="a" style="left:1.5px;top:439.50px;width:321px;height:9.55px;background:#272727"></div>
<svg class="a" style="left:2px;top:440.50px" width="10" height="8"><ellipse cx="4.5" cy="4" rx="3.5" ry="2.2" fill="#cfcfcf"/><circle cx="4.5" cy="4" r="1" fill="#272727"/></svg>
<div class="a" style="left:13px;top:440.00px;width:7px;height:8.55px;background:#1f1f1f"></div>
<div class="a" style="left:21px;top:440.00px;width:7px;height:8.55px;background:#1f1f1f"></div>
<div class="a" style="left:29px;top:440.00px;width:7px;height:8.55px;background:#1f1f1f"></div>
<svg class="a" style="left:42px;top:442.00px" width="4" height="7"><path d="M1 1 L3 3.5 L1 6" fill="none" stroke="#8a8a8a" stroke-width="0.9"/></svg>
<div class="a" style="left:48px;top:440.00px;width:8px;height:8.5px;background:#d33b3b"></div>
<div class="t" style="left:60px;top:441.30px;font-size:6px;color:#9a9a9a">1</div>
<div class="a" style="left:77px;top:440.30px;width:7px;height:7.5px;background:#f2f2f2"></div>
<div class="t" style="left:88px;top:441.00px;font-size:7px;color:#b5b5b5;--w:28.5;transform:scaleX(0.95);transform-origin:0 0">scale in 2</div>
<svg class="a" style="left:174px;top:440.00px" width="30" height="9"><path d="M3.5 7 q3-7 6 0z M2.5 7 h8" stroke="#bbb" fill="#bbb" stroke-width="0.8"/><circle cx="13" cy="4.5" r="1.6" fill="#555"/><path d="M19.5 7.5 l5-6" stroke="#d0d0d0" stroke-width="1"/></svg>
<div class="a" style="left:218px;top:440.00px;width:6px;height:8.55px;background:#1f1f1f"></div>
<div class="a" style="left:225px;top:440.00px;width:6px;height:8.55px;background:#1f1f1f"></div>
<div class="a" style="left:232px;top:440.00px;width:6px;height:8.55px;background:#1f1f1f"></div>
<div class="a" style="left:239px;top:440.00px;width:6px;height:8.55px;background:#1f1f1f"></div>
<svg class="a" style="left:251px;top:440.00px" width="10" height="9"><circle cx="5" cy="4.5" r="3.3" fill="none" stroke="#8a8a8a" stroke-width="1.2"/><circle cx="5" cy="4.5" r="1.2" fill="#8a8a8a"/></svg>
<div class="a" style="left:263.5px;top:439.80px;width:48px;height:8.95px;background:#1c1c1c"></div>
<div class="t" style="left:267px;top:441.30px;font-size:6px;color:#b8b8b8">なし</div>
<svg class="a" style="left:305px;top:441.80px" width="6" height="5"><path d="M0.8 1 L3 3.3 L5.2 1" fill="none" stroke="#999" stroke-width="0.9"/></svg>
<div class="a" style="left:1.5px;top:450.05px;width:321px;height:9.55px;background:#3b3b3b"></div>
<svg class="a" style="left:2px;top:451.05px" width="10" height="8"><ellipse cx="4.5" cy="4" rx="3.5" ry="2.2" fill="#cfcfcf"/><circle cx="4.5" cy="4" r="1" fill="#3b3b3b"/></svg>
<div class="a" style="left:13px;top:450.55px;width:7px;height:8.55px;background:#333"></div>
<div class="a" style="left:21px;top:450.55px;width:7px;height:8.55px;background:#333"></div>
<div class="a" style="left:29px;top:450.55px;width:7px;height:8.55px;background:#333"></div>
<svg class="a" style="left:42px;top:452.55px" width="4" height="7"><path d="M1 1 L3 3.5 L1 6" fill="none" stroke="#8a8a8a" stroke-width="0.9"/></svg>
<div class="a" style="left:48px;top:450.55px;width:8px;height:8.5px;background:#c2ad88"></div>
<div class="t" style="left:60px;top:451.85px;font-size:6px;color:#9a9a9a">2</div>
<div class="a" style="left:76px;top:451.55px;width:9px;height:6.5px;background:#bdbdbd"></div><div class="a" style="left:78px;top:453.05px;width:5px;height:3px;background:#444"></div>
<div class="a" style="left:86px;top:450.05px;width:87.5px;height:9.55px;background:#b5b5b5"></div>
<div class="t" style="left:88px;top:451.55px;font-size:7px;color:#333;--w:19.5;transform:scaleX(0.975);transform-origin:0 0">[liquid]</div>
<svg class="a" style="left:174px;top:450.55px" width="30" height="9"><path d="M3.5 7 q3-7 6 0z M2.5 7 h8" stroke="#bbb" fill="#bbb" stroke-width="0.8"/><circle cx="13" cy="4.5" r="1.6" fill="#555"/><path d="M19.5 7.5 l5-6" stroke="#d0d0d0" stroke-width="1"/></svg>
<div class="a" style="left:218px;top:450.55px;width:6px;height:8.55px;background:#333"></div>
<div class="a" style="left:225px;top:450.55px;width:6px;height:8.55px;background:#333"></div>
<div class="a" style="left:232px;top:450.55px;width:6px;height:8.55px;background:#333"></div>
<div class="a" style="left:239px;top:450.55px;width:6px;height:8.55px;background:#333"></div>
<svg class="a" style="left:251px;top:450.55px" width="10" height="9"><circle cx="5" cy="4.5" r="3.3" fill="none" stroke="#8a8a8a" stroke-width="1.2"/><circle cx="5" cy="4.5" r="1.2" fill="#8a8a8a"/></svg>
<div class="a" style="left:263.5px;top:450.35px;width:48px;height:8.95px;background:#1c1c1c"></div>
<div class="t" style="left:267px;top:451.85px;font-size:6px;color:#b8b8b8">1. scale in 2</div>
<svg class="a" style="left:305px;top:452.35px" width="6" height="5"><path d="M0.8 1 L3 3.3 L5.2 1" fill="none" stroke="#999" stroke-width="0.9"/></svg>
<div class="a" style="left:1.5px;top:460.60px;width:321px;height:9.55px;background:#272727"></div>
<svg class="a" style="left:2px;top:461.60px" width="10" height="8"><ellipse cx="4.5" cy="4" rx="3.5" ry="2.2" fill="#cfcfcf"/><circle cx="4.5" cy="4" r="1" fill="#272727"/></svg>
<div class="a" style="left:13px;top:461.10px;width:7px;height:8.55px;background:#1f1f1f"></div>
<div class="a" style="left:21px;top:461.10px;width:7px;height:8.55px;background:#1f1f1f"></div>
<div class="a" style="left:29px;top:461.10px;width:7px;height:8.55px;background:#1f1f1f"></div>
<svg class="a" style="left:42px;top:463.10px" width="4" height="7"><path d="M1 1 L3 3.5 L1 6" fill="none" stroke="#8a8a8a" stroke-width="0.9"/></svg>
<div class="a" style="left:48px;top:461.10px;width:8px;height:8.5px;background:#6a85e6"></div>
<div class="t" style="left:60px;top:462.40px;font-size:6px;color:#9a9a9a">3</div>
<svg class="a" style="left:76px;top:461.40px" width="10" height="9"><path d="M4.8 1.2 L5.8 3.7 L8.5 3.9 L6.4 5.6 L7.1 8.2 L4.8 6.8 L2.5 8.2 L3.2 5.6 L1.1 3.9 L3.8 3.7 Z" fill="#dcdcdc"/></svg>
<div class="t" style="left:88px;top:462.10px;font-size:7px;color:#b5b5b5;--w:69.7;transform:scaleX(0.85);transform-origin:0 0">レイヤー 2アウトライン 2</div>
<svg class="a" style="left:174px;top:461.10px" width="30" height="9"><path d="M3.5 7 q3-7 6 0z M2.5 7 h8" stroke="#bbb" fill="#bbb" stroke-width="0.8"/><circle cx="13" cy="4.5" r="1.6" fill="#555"/><path d="M19.5 7.5 l5-6" stroke="#d0d0d0" stroke-width="1"/></svg>
<div class="a" style="left:218px;top:461.10px;width:6px;height:8.55px;background:#1f1f1f"></div>
<div class="a" style="left:225px;top:461.10px;width:6px;height:8.55px;background:#1f1f1f"></div>
<div class="a" style="left:232px;top:461.10px;width:6px;height:8.55px;background:#1f1f1f"></div>
<div class="a" style="left:239px;top:461.10px;width:6px;height:8.55px;background:#1f1f1f"></div>
<svg class="a" style="left:251px;top:461.10px" width="10" height="9"><circle cx="5" cy="4.5" r="3.3" fill="none" stroke="#8a8a8a" stroke-width="1.2"/><circle cx="5" cy="4.5" r="1.2" fill="#8a8a8a"/></svg>
<div class="a" style="left:263.5px;top:460.90px;width:48px;height:8.95px;background:#1c1c1c"></div>
<div class="t" style="left:267px;top:462.40px;font-size:6px;color:#b8b8b8">1. scale in 2</div>
<svg class="a" style="left:305px;top:462.90px" width="6" height="5"><path d="M0.8 1 L3 3.3 L5.2 1" fill="none" stroke="#999" stroke-width="0.9"/></svg>
<div class="a" style="left:1.5px;top:471.15px;width:321px;height:9.55px;background:#272727"></div>
<svg class="a" style="left:2px;top:472.15px" width="10" height="8"><ellipse cx="4.5" cy="4" rx="3.5" ry="2.2" fill="#cfcfcf"/><circle cx="4.5" cy="4" r="1" fill="#272727"/></svg>
<div class="a" style="left:13px;top:471.65px;width:7px;height:8.55px;background:#1f1f1f"></div>
<div class="a" style="left:21px;top:471.65px;width:7px;height:8.55px;background:#1f1f1f"></div>
<div class="a" style="left:29px;top:471.65px;width:7px;height:8.55px;background:#1f1f1f"></div>
<svg class="a" style="left:42px;top:473.65px" width="4" height="7"><path d="M1 1 L3 3.5 L1 6" fill="none" stroke="#8a8a8a" stroke-width="0.9"/></svg>
<div class="a" style="left:48px;top:471.65px;width:8px;height:8.5px;background:#6a85e6"></div>
<div class="t" style="left:60px;top:472.95px;font-size:6px;color:#9a9a9a">4</div>
<svg class="a" style="left:76px;top:471.95px" width="10" height="9"><path d="M4.8 1.2 L5.8 3.7 L8.5 3.9 L6.4 5.6 L7.1 8.2 L4.8 6.8 L2.5 8.2 L3.2 5.6 L1.1 3.9 L3.8 3.7 Z" fill="#dcdcdc"/></svg>
<div class="t" style="left:88px;top:472.65px;font-size:7px;color:#b5b5b5;--w:69.7;transform:scaleX(0.85);transform-origin:0 0">レイヤー 2アウトライン 2</div>
<svg class="a" style="left:174px;top:471.65px" width="30" height="9"><path d="M3.5 7 q3-7 6 0z M2.5 7 h8" stroke="#bbb" fill="#bbb" stroke-width="0.8"/><circle cx="13" cy="4.5" r="1.6" fill="#555"/><path d="M19.5 7.5 l5-6" stroke="#d0d0d0" stroke-width="1"/></svg>
<div class="a" style="left:218px;top:471.65px;width:6px;height:8.55px;background:#1f1f1f"></div>
<div class="a" style="left:225px;top:471.65px;width:6px;height:8.55px;background:#1f1f1f"></div>
<div class="a" style="left:232px;top:471.65px;width:6px;height:8.55px;background:#1f1f1f"></div>
<div class="a" style="left:239px;top:471.65px;width:6px;height:8.55px;background:#1f1f1f"></div>
<svg class="a" style="left:251px;top:471.65px" width="10" height="9"><circle cx="5" cy="4.5" r="3.3" fill="none" stroke="#8a8a8a" stroke-width="1.2"/><circle cx="5" cy="4.5" r="1.2" fill="#8a8a8a"/></svg>
<div class="a" style="left:263.5px;top:471.45px;width:48px;height:8.95px;background:#1c1c1c"></div>
<div class="t" style="left:267px;top:472.95px;font-size:6px;color:#b8b8b8">1. scale in 2</div>
<svg class="a" style="left:305px;top:473.45px" width="6" height="5"><path d="M0.8 1 L3 3.3 L5.2 1" fill="none" stroke="#999" stroke-width="0.9"/></svg>
<div class="a" style="left:1.5px;top:481.70px;width:321px;height:9.55px;background:#272727"></div>
<svg class="a" style="left:2px;top:482.70px" width="10" height="8"><ellipse cx="4.5" cy="4" rx="3.5" ry="2.2" fill="#cfcfcf"/><circle cx="4.5" cy="4" r="1" fill="#272727"/></svg>
<div class="a" style="left:13px;top:482.20px;width:7px;height:8.55px;background:#1f1f1f"></div>
<div class="a" style="left:21px;top:482.20px;width:7px;height:8.55px;background:#1f1f1f"></div>
<div class="a" style="left:29px;top:482.20px;width:7px;height:8.55px;background:#1f1f1f"></div>
<svg class="a" style="left:42px;top:484.20px" width="4" height="7"><path d="M1 1 L3 3.5 L1 6" fill="none" stroke="#8a8a8a" stroke-width="0.9"/></svg>
<div class="a" style="left:48px;top:482.20px;width:8px;height:8.5px;background:#d33b3b"></div>
<div class="t" style="left:60px;top:483.50px;font-size:6px;color:#9a9a9a">5</div>
<div class="a" style="left:77px;top:482.50px;width:7px;height:7.5px;background:#f2f2f2"></div>
<div class="t" style="left:88px;top:483.20px;font-size:7px;color:#b5b5b5;--w:23.0;transform:scaleX(0.958);transform-origin:0 0">scale in</div>
<svg class="a" style="left:174px;top:482.20px" width="30" height="9"><path d="M3.5 7 q3-7 6 0z M2.5 7 h8" stroke="#bbb" fill="#bbb" stroke-width="0.8"/><circle cx="13" cy="4.5" r="1.6" fill="#555"/><path d="M19.5 7.5 l5-6" stroke="#d0d0d0" stroke-width="1"/></svg>
<div class="a" style="left:218px;top:482.20px;width:6px;height:8.55px;background:#1f1f1f"></div>
<div class="a" style="left:225px;top:482.20px;width:6px;height:8.55px;background:#1f1f1f"></div>
<div class="a" style="left:232px;top:482.20px;width:6px;height:8.55px;background:#1f1f1f"></div>
<div class="a" style="left:239px;top:482.20px;width:6px;height:8.55px;background:#1f1f1f"></div>
<svg class="a" style="left:251px;top:482.20px" width="10" height="9"><circle cx="5" cy="4.5" r="3.3" fill="none" stroke="#8a8a8a" stroke-width="1.2"/><circle cx="5" cy="4.5" r="1.2" fill="#8a8a8a"/></svg>
<div class="a" style="left:263.5px;top:482.00px;width:48px;height:8.95px;background:#1c1c1c"></div>
<div class="t" style="left:267px;top:483.50px;font-size:6px;color:#b8b8b8">なし</div>
<svg class="a" style="left:305px;top:484.00px" width="6" height="5"><path d="M0.8 1 L3 3.3 L5.2 1" fill="none" stroke="#999" stroke-width="0.9"/></svg>
<div class="a" style="left:1.5px;top:492.25px;width:321px;height:9.55px;background:#272727"></div>
<svg class="a" style="left:2px;top:493.25px" width="10" height="8"><ellipse cx="4.5" cy="4" rx="3.5" ry="2.2" fill="#cfcfcf"/><circle cx="4.5" cy="4" r="1" fill="#272727"/></svg>
<div class="a" style="left:13px;top:492.75px;width:7px;height:8.55px;background:#1f1f1f"></div>
<div class="a" style="left:21px;top:492.75px;width:7px;height:8.55px;background:#1f1f1f"></div>
<div class="a" style="left:29px;top:492.75px;width:7px;height:8.55px;background:#1f1f1f"></div>
<svg class="a" style="left:42px;top:494.75px" width="4" height="7"><path d="M1 1 L3 3.5 L1 6" fill="none" stroke="#8a8a8a" stroke-width="0.9"/></svg>
<div class="a" style="left:48px;top:492.75px;width:8px;height:8.5px;background:#c2ad88"></div>
<div class="t" style="left:60px;top:494.05px;font-size:6px;color:#9a9a9a">6</div>
<div class="a" style="left:76px;top:493.75px;width:9px;height:6.5px;background:#bdbdbd"></div><div class="a" style="left:78px;top:495.25px;width:5px;height:3px;background:#444"></div>
<div class="t" style="left:88px;top:493.75px;font-size:7px;color:#b5b5b5;--w:19.5;transform:scaleX(0.975);transform-origin:0 0">[liquid]</div>
<svg class="a" style="left:174px;top:492.75px" width="30" height="9"><path d="M3.5 7 q3-7 6 0z M2.5 7 h8" stroke="#bbb" fill="#bbb" stroke-width="0.8"/><circle cx="13" cy="4.5" r="1.6" fill="#555"/><path d="M19.5 7.5 l5-6" stroke="#d0d0d0" stroke-width="1"/></svg>
<div class="a" style="left:218px;top:492.75px;width:6px;height:8.55px;background:#1f1f1f"></div>
<div class="a" style="left:225px;top:492.75px;width:6px;height:8.55px;background:#1f1f1f"></div>
<div class="a" style="left:232px;top:492.75px;width:6px;height:8.55px;background:#1f1f1f"></div>
<div class="a" style="left:239px;top:492.75px;width:6px;height:8.55px;background:#1f1f1f"></div>
<svg class="a" style="left:251px;top:492.75px" width="10" height="9"><circle cx="5" cy="4.5" r="3.3" fill="none" stroke="#8a8a8a" stroke-width="1.2"/><circle cx="5" cy="4.5" r="1.2" fill="#8a8a8a"/></svg>
<div class="a" style="left:263.5px;top:492.55px;width:48px;height:8.95px;background:#1c1c1c"></div>
<div class="t" style="left:267px;top:494.05px;font-size:6px;color:#b8b8b8">5. scale in</div>
<svg class="a" style="left:305px;top:494.55px" width="6" height="5"><path d="M0.8 1 L3 3.3 L5.2 1" fill="none" stroke="#999" stroke-width="0.9"/></svg>
<div class="a" style="left:1.5px;top:502.80px;width:321px;height:9.55px;background:#272727"></div>
<svg class="a" style="left:2px;top:503.80px" width="10" height="8"><ellipse cx="4.5" cy="4" rx="3.5" ry="2.2" fill="#cfcfcf"/><circle cx="4.5" cy="4" r="1" fill="#272727"/></svg>
<div class="a" style="left:13px;top:503.30px;width:7px;height:8.55px;background:#1f1f1f"></div>
<div class="a" style="left:21px;top:503.30px;width:7px;height:8.55px;background:#1f1f1f"></div>
<div class="a" style="left:29px;top:503.30px;width:7px;height:8.55px;background:#1f1f1f"></div>
<svg class="a" style="left:42px;top:505.30px" width="4" height="7"><path d="M1 1 L3 3.5 L1 6" fill="none" stroke="#8a8a8a" stroke-width="0.9"/></svg>
<div class="a" style="left:48px;top:503.30px;width:8px;height:8.5px;background:#6a85e6"></div>
<div class="t" style="left:60px;top:504.60px;font-size:6px;color:#9a9a9a">7</div>
<svg class="a" style="left:76px;top:503.60px" width="10" height="9"><path d="M4.8 1.2 L5.8 3.7 L8.5 3.9 L6.4 5.6 L7.1 8.2 L4.8 6.8 L2.5 8.2 L3.2 5.6 L1.1 3.9 L3.8 3.7 Z" fill="#dcdcdc"/></svg>
<div class="t" style="left:88px;top:504.30px;font-size:7px;color:#b5b5b5;--w:64.0;transform:scaleX(0.842);transform-origin:0 0">レイヤー 2アウトライン</div>
<svg class="a" style="left:174px;top:503.30px" width="30" height="9"><path d="M3.5 7 q3-7 6 0z M2.5 7 h8" stroke="#bbb" fill="#bbb" stroke-width="0.8"/><circle cx="13" cy="4.5" r="1.6" fill="#555"/><path d="M19.5 7.5 l5-6" stroke="#d0d0d0" stroke-width="1"/></svg>
<div class="a" style="left:218px;top:503.30px;width:6px;height:8.55px;background:#1f1f1f"></div>
<div class="a" style="left:225px;top:503.30px;width:6px;height:8.55px;background:#1f1f1f"></div>
<div class="a" style="left:232px;top:503.30px;width:6px;height:8.55px;background:#1f1f1f"></div>
<div class="a" style="left:239px;top:503.30px;width:6px;height:8.55px;background:#1f1f1f"></div>
<svg class="a" style="left:251px;top:503.30px" width="10" height="9"><circle cx="5" cy="4.5" r="3.3" fill="none" stroke="#8a8a8a" stroke-width="1.2"/><circle cx="5" cy="4.5" r="1.2" fill="#8a8a8a"/></svg>
<div class="a" style="left:263.5px;top:503.10px;width:48px;height:8.95px;background:#1c1c1c"></div>
<div class="t" style="left:267px;top:504.60px;font-size:6px;color:#b8b8b8">5. scale in</div>
<svg class="a" style="left:305px;top:505.10px" width="6" height="5"><path d="M0.8 1 L3 3.3 L5.2 1" fill="none" stroke="#999" stroke-width="0.9"/></svg>
<div class="a" style="left:1.5px;top:513.35px;width:321px;height:9.55px;background:#272727"></div>
<svg class="a" style="left:2px;top:514.35px" width="10" height="8"><ellipse cx="4.5" cy="4" rx="3.5" ry="2.2" fill="#cfcfcf"/><circle cx="4.5" cy="4" r="1" fill="#272727"/></svg>
<div class="a" style="left:13px;top:513.85px;width:7px;height:8.55px;background:#1f1f1f"></div>
<div class="a" style="left:21px;top:513.85px;width:7px;height:8.55px;background:#1f1f1f"></div>
<div class="a" style="left:29px;top:513.85px;width:7px;height:8.55px;background:#1f1f1f"></div>
<svg class="a" style="left:42px;top:515.85px" width="4" height="7"><path d="M1 1 L3 3.5 L1 6" fill="none" stroke="#8a8a8a" stroke-width="0.9"/></svg>
<div class="a" style="left:48px;top:513.85px;width:8px;height:8.5px;background:#6a85e6"></div>
<div class="t" style="left:60px;top:515.15px;font-size:6px;color:#9a9a9a">8</div>
<svg class="a" style="left:76px;top:514.15px" width="10" height="9"><path d="M4.8 1.2 L5.8 3.7 L8.5 3.9 L6.4 5.6 L7.1 8.2 L4.8 6.8 L2.5 8.2 L3.2 5.6 L1.1 3.9 L3.8 3.7 Z" fill="#dcdcdc"/></svg>
<div class="t" style="left:88px;top:514.85px;font-size:7px;color:#b5b5b5;--w:64.0;transform:scaleX(0.842);transform-origin:0 0">レイヤー 2アウトライン</div>
<svg class="a" style="left:174px;top:513.85px" width="30" height="9"><path d="M3.5 7 q3-7 6 0z M2.5 7 h8" stroke="#bbb" fill="#bbb" stroke-width="0.8"/><circle cx="13" cy="4.5" r="1.6" fill="#555"/><path d="M19.5 7.5 l5-6" stroke="#d0d0d0" stroke-width="1"/></svg>
<div class="a" style="left:218px;top:513.85px;width:6px;height:8.55px;background:#1f1f1f"></div>
<div class="a" style="left:225px;top:513.85px;width:6px;height:8.55px;background:#1f1f1f"></div>
<div class="a" style="left:232px;top:513.85px;width:6px;height:8.55px;background:#1f1f1f"></div>
<div class="a" style="left:239px;top:513.85px;width:6px;height:8.55px;background:#1f1f1f"></div>
<svg class="a" style="left:251px;top:513.85px" width="10" height="9"><circle cx="5" cy="4.5" r="3.3" fill="none" stroke="#8a8a8a" stroke-width="1.2"/><circle cx="5" cy="4.5" r="1.2" fill="#8a8a8a"/></svg>
<div class="a" style="left:263.5px;top:513.65px;width:48px;height:8.95px;background:#1c1c1c"></div>
<div class="t" style="left:267px;top:515.15px;font-size:6px;color:#b8b8b8">5. scale in</div>
<svg class="a" style="left:305px;top:515.65px" width="6" height="5"><path d="M0.8 1 L3 3.3 L5.2 1" fill="none" stroke="#999" stroke-width="0.9"/></svg>
<div class="a" style="left:1.5px;top:523.90px;width:321px;height:9.55px;background:#272727"></div>
<svg class="a" style="left:2px;top:524.90px" width="10" height="8"><ellipse cx="4.5" cy="4" rx="3.5" ry="2.2" fill="#cfcfcf"/><circle cx="4.5" cy="4" r="1" fill="#272727"/></svg>
<div class="a" style="left:13px;top:524.40px;width:7px;height:8.55px;background:#1f1f1f"></div>
<div class="a" style="left:21px;top:524.40px;width:7px;height:8.55px;background:#1f1f1f"></div>
<div class="a" style="left:29px;top:524.40px;width:7px;height:8.55px;background:#1f1f1f"></div>
<svg class="a" style="left:42px;top:526.40px" width="4" height="7"><path d="M1 1 L3 3.5 L1 6" fill="none" stroke="#8a8a8a" stroke-width="0.9"/></svg>
<div class="a" style="left:48px;top:524.40px;width:8px;height:8.5px;background:#6a85e6"></div>
<div class="t" style="left:60px;top:525.70px;font-size:6px;color:#9a9a9a">9</div>
<svg class="a" style="left:76px;top:524.70px" width="10" height="9"><path d="M4.8 1.2 L5.8 3.7 L8.5 3.9 L6.4 5.6 L7.1 8.2 L4.8 6.8 L2.5 8.2 L3.2 5.6 L1.1 3.9 L3.8 3.7 Z" fill="#dcdcdc"/></svg>
<div class="t" style="left:88px;top:525.40px;font-size:7px;color:#b5b5b5;--w:21.0;transform:scaleX(0.84);transform-origin:0 0">Shadow</div>
<svg class="a" style="left:174px;top:524.40px" width="30" height="9"><path d="M3.5 7 q3-7 6 0z M2.5 7 h8" stroke="#bbb" fill="#bbb" stroke-width="0.8"/><circle cx="13" cy="4.5" r="1.6" fill="#555"/><path d="M19.5 7.5 l5-6" stroke="#d0d0d0" stroke-width="1"/></svg>
<div class="a" style="left:218px;top:524.40px;width:6px;height:8.55px;background:#1f1f1f"></div>
<div class="a" style="left:225px;top:524.40px;width:6px;height:8.55px;background:#1f1f1f"></div>
<div class="a" style="left:232px;top:524.40px;width:6px;height:8.55px;background:#1f1f1f"></div>
<div class="a" style="left:239px;top:524.40px;width:6px;height:8.55px;background:#1f1f1f"></div>
<svg class="a" style="left:251px;top:524.40px" width="10" height="9"><circle cx="5" cy="4.5" r="3.3" fill="none" stroke="#8a8a8a" stroke-width="1.2"/><circle cx="5" cy="4.5" r="1.2" fill="#8a8a8a"/></svg>
<div class="a" style="left:263.5px;top:524.20px;width:48px;height:8.95px;background:#1c1c1c"></div>
<div class="t" style="left:267px;top:525.70px;font-size:6px;color:#b8b8b8">5. scale in</div>
<svg class="a" style="left:305px;top:526.20px" width="6" height="5"><path d="M0.8 1 L3 3.3 L5.2 1" fill="none" stroke="#999" stroke-width="0.9"/></svg>
<div class="a" style="left:1.5px;top:534.45px;width:321px;height:9.55px;background:#272727"></div>
<svg class="a" style="left:2px;top:535.45px" width="10" height="8"><ellipse cx="4.5" cy="4" rx="3.5" ry="2.2" fill="#cfcfcf"/><circle cx="4.5" cy="4" r="1" fill="#272727"/></svg>
<div class="a" style="left:13px;top:534.95px;width:7px;height:8.55px;background:#1f1f1f"></div>
<div class="a" style="left:21px;top:534.95px;width:7px;height:8.55px;background:#1f1f1f"></div>
<div class="a" style="left:29px;top:534.95px;width:7px;height:8.55px;background:#1f1f1f"></div>
<svg class="a" style="left:42px;top:536.95px" width="4" height="7"><path d="M1 1 L3 3.5 L1 6" fill="none" stroke="#8a8a8a" stroke-width="0.9"/></svg>
<div class="a" style="left:48px;top:534.95px;width:8px;height:8.5px;background:#6a85e6"></div>
<div class="t" style="left:60px;top:536.25px;font-size:6px;color:#9a9a9a">10</div>
<svg class="a" style="left:76px;top:535.25px" width="10" height="9"><path d="M4.8 1.2 L5.8 3.7 L8.5 3.9 L6.4 5.6 L7.1 8.2 L4.8 6.8 L2.5 8.2 L3.2 5.6 L1.1 3.9 L3.8 3.7 Z" fill="#dcdcdc"/></svg>
<div class="t" style="left:88px;top:535.95px;font-size:7px;color:#b5b5b5;--w:40.0;transform:scaleX(0.755);transform-origin:0 0">bくアウトライン</div>
<svg class="a" style="left:174px;top:534.95px" width="30" height="9"><path d="M3.5 7 q3-7 6 0z M2.5 7 h8" stroke="#bbb" fill="#bbb" stroke-width="0.8"/><circle cx="13" cy="4.5" r="1.6" fill="#555"/><path d="M19.5 7.5 l5-6" stroke="#d0d0d0" stroke-width="1"/></svg>
<div class="a" style="left:218px;top:534.95px;width:6px;height:8.55px;background:#1f1f1f"></div>
<div class="a" style="left:225px;top:534.95px;width:6px;height:8.55px;background:#1f1f1f"></div>
<div class="a" style="left:232px;top:534.95px;width:6px;height:8.55px;background:#1f1f1f"></div>
<div class="a" style="left:239px;top:534.95px;width:6px;height:8.55px;background:#1f1f1f"></div>
<svg class="a" style="left:251px;top:534.95px" width="10" height="9"><circle cx="5" cy="4.5" r="3.3" fill="none" stroke="#8a8a8a" stroke-width="1.2"/><circle cx="5" cy="4.5" r="1.2" fill="#8a8a8a"/></svg>
<div class="a" style="left:263.5px;top:534.75px;width:48px;height:8.95px;background:#1c1c1c"></div>
<div class="t" style="left:267px;top:536.25px;font-size:6px;color:#b8b8b8">なし</div>
<svg class="a" style="left:305px;top:536.75px" width="6" height="5"><path d="M0.8 1 L3 3.3 L5.2 1" fill="none" stroke="#999" stroke-width="0.9"/></svg>
<div class="a" style="left:322px;top:411px;width:4px;height:179px;background:#161616"></div>
<div class="a" style="left:326px;top:411px;width:730px;height:179px;background:#323232"></div>
<div class="a" style="left:326px;top:411px;width:730px;height:2px;background:#1a1a1a"></div>
<div class="a" style="left:327px;top:412.5px;width:726px;height:4.5px;background:#8c8c8c"></div>
<div class="a" style="left:326px;top:417px;width:730px;height:10.5px;background:#1c1c1c"></div>
<div class="a" style="left:327px;top:427.5px;width:726px;height:9px;background:#767676"></div>
<div class="a" style="left:327px;top:436.5px;width:726px;height:2px;background:#389e3c"></div>
<div class="a" style="left:326px;top:412px;width:3px;height:5px;background:#3a86e0;border-radius:2px 0 0 2px"></div>
<div class="a" style="left:325px;top:428px;width:3px;height:8px;background:#3a86e0;border-radius:2px 0 0 2px"></div>
<div class="a" style="left:1053px;top:412px;width:3px;height:5px;background:#3a86e0"></div>
<div class="a" style="left:1053px;top:428px;width:3px;height:8px;background:#3a86e0"></div>
<div class="a" style="left:326px;top:439.50px;width:727px;height:10.55px;background:#262626"></div>
<div class="a" style="left:326px;top:450.05px;width:727px;height:10.55px;background:#262626"></div>
<div class="a" style="left:326px;top:460.60px;width:727px;height:10.55px;background:#262626"></div>
<div class="a" style="left:326px;top:471.15px;width:727px;height:10.55px;background:#262626"></div>
<div class="a" style="left:326px;top:481.70px;width:727px;height:10.55px;background:#262626"></div>
<div class="a" style="left:326px;top:492.25px;width:727px;height:10.55px;background:#262626"></div>
<div class="a" style="left:326px;top:502.80px;width:727px;height:10.55px;background:#262626"></div>
<div class="a" style="left:326px;top:513.35px;width:727px;height:10.55px;background:#262626"></div>
<div class="a" style="left:326px;top:523.90px;width:727px;height:10.55px;background:#262626"></div>
<div class="a" style="left:326px;top:534.45px;width:727px;height:10.55px;background:#262626"></div>
<div class="a" style="left:327px;top:440.00px;width:61px;height:9px;background:#3b3b3b"></div>
<div class="a" style="left:388px;top:440.00px;width:664px;height:9px;background:#8b3c3c"></div>
<div class="a" style="left:327px;top:450.55px;width:61px;height:9px;background:#6d695f"></div>
<div class="a" style="left:388px;top:450.55px;width:664px;height:9px;background:#b2a282"></div>
<div class="a" style="left:327px;top:461.10px;width:61px;height:9px;background:#3b3b3b"></div>
<div class="a" style="left:388px;top:461.10px;width:664px;height:9px;background:#56629f"></div>
<div class="a" style="left:327px;top:471.65px;width:61px;height:9px;background:#3b3b3b"></div>
<div class="a" style="left:388px;top:471.65px;width:664px;height:9px;background:#56629f"></div>
<div class="a" style="left:327px;top:482.20px;width:61px;height:9px;background:#8b3c3c"></div>
<div class="a" style="left:388px;top:482.20px;width:664px;height:9px;background:#3a3a3a"></div>
<div class="a" style="left:327px;top:492.75px;width:61px;height:9px;background:#8a7f69"></div>
<div class="a" style="left:388px;top:492.75px;width:664px;height:9px;background:#4a4842"></div>
<div class="a" style="left:327px;top:503.30px;width:61px;height:9px;background:#56629f"></div>
<div class="a" style="left:388px;top:503.30px;width:664px;height:9px;background:#3a3a3a"></div>
<div class="a" style="left:327px;top:513.85px;width:61px;height:9px;background:#56629f"></div>
<div class="a" style="left:388px;top:513.85px;width:664px;height:9px;background:#3a3a3a"></div>
<div class="a" style="left:327px;top:524.40px;width:725px;height:9px;background:#56629f"></div>
<div class="a" style="left:327px;top:534.95px;width:725px;height:9px;background:#56629f"></div>
<div class="a" style="left:388px;top:450px;width:1px;height:9.5px;background:#e8dcc0"></div>
<div class="t" style="left:310.5px;top:418px;width:40px;text-align:center;font-size:6.5px;color:#e4e4e4;-webkit-text-stroke:0.1px #e4e4e4">0:00f</div>
<div class="a" style="left:327.5px;top:425px;width:1px;height:2px;background:#aaa"></div>
<div class="t" style="left:347.7px;top:418px;width:40px;text-align:center;font-size:6.5px;color:#e4e4e4;-webkit-text-stroke:0.1px #e4e4e4">10f</div>
<div class="a" style="left:367.7px;top:425px;width:1px;height:2px;background:#aaa"></div>
<div class="t" style="left:388.0px;top:418px;width:40px;text-align:center;font-size:6.5px;color:#e4e4e4;-webkit-text-stroke:0.1px #e4e4e4">20f</div>
<div class="a" style="left:408.0px;top:425px;width:1px;height:2px;background:#aaa"></div>
<div class="t" style="left:428.2px;top:418px;width:40px;text-align:center;font-size:6.5px;color:#e4e4e4;-webkit-text-stroke:0.1px #e4e4e4">01:00f</div>
<div class="a" style="left:448.2px;top:425px;width:1px;height:2px;background:#aaa"></div>
<div class="t" style="left:468.4px;top:418px;width:40px;text-align:center;font-size:6.5px;color:#e4e4e4;-webkit-text-stroke:0.1px #e4e4e4">10f</div>
<div class="a" style="left:488.4px;top:425px;width:1px;height:2px;background:#aaa"></div>
<div class="t" style="left:508.6px;top:418px;width:40px;text-align:center;font-size:6.5px;color:#e4e4e4;-webkit-text-stroke:0.1px #e4e4e4">20f</div>
<div class="a" style="left:528.6px;top:425px;width:1px;height:2px;background:#aaa"></div>
<div class="t" style="left:548.9px;top:418px;width:40px;text-align:center;font-size:6.5px;color:#e4e4e4;-webkit-text-stroke:0.1px #e4e4e4">02:00f</div>
<div class="a" style="left:568.9px;top:425px;width:1px;height:2px;background:#aaa"></div>
<div class="t" style="left:589.1px;top:418px;width:40px;text-align:center;font-size:6.5px;color:#e4e4e4;-webkit-text-stroke:0.1px #e4e4e4">10f</div>
<div class="a" style="left:609.1px;top:425px;width:1px;height:2px;background:#aaa"></div>
<div class="t" style="left:629.3px;top:418px;width:40px;text-align:center;font-size:6.5px;color:#e4e4e4;-webkit-text-stroke:0.1px #e4e4e4">20f</div>
<div class="a" style="left:649.3px;top:425px;width:1px;height:2px;background:#aaa"></div>
<div class="t" style="left:669.6px;top:418px;width:40px;text-align:center;font-size:6.5px;color:#e4e4e4;-webkit-text-stroke:0.1px #e4e4e4">03:00f</div>
<div class="a" style="left:689.6px;top:425px;width:1px;height:2px;background:#aaa"></div>
<div class="t" style="left:709.8px;top:418px;width:40px;text-align:center;font-size:6.5px;color:#e4e4e4;-webkit-text-stroke:0.1px #e4e4e4">10f</div>
<div class="a" style="left:729.8px;top:425px;width:1px;height:2px;background:#aaa"></div>
<div class="t" style="left:750.0px;top:418px;width:40px;text-align:center;font-size:6.5px;color:#e4e4e4;-webkit-text-stroke:0.1px #e4e4e4">20f</div>
<div class="a" style="left:770.0px;top:425px;width:1px;height:2px;background:#aaa"></div>
<div class="t" style="left:790.3px;top:418px;width:40px;text-align:center;font-size:6.5px;color:#e4e4e4;-webkit-text-stroke:0.1px #e4e4e4">04:00f</div>
<div class="a" style="left:810.3px;top:425px;width:1px;height:2px;background:#aaa"></div>
<div class="t" style="left:830.5px;top:418px;width:40px;text-align:center;font-size:6.5px;color:#e4e4e4;-webkit-text-stroke:0.1px #e4e4e4">10f</div>
<div class="a" style="left:850.5px;top:425px;width:1px;height:2px;background:#aaa"></div>
<div class="t" style="left:870.7px;top:418px;width:40px;text-align:center;font-size:6.5px;color:#e4e4e4;-webkit-text-stroke:0.1px #e4e4e4">20f</div>
<div class="a" style="left:890.7px;top:425px;width:1px;height:2px;background:#aaa"></div>
<div class="t" style="left:910.9px;top:418px;width:40px;text-align:center;font-size:6.5px;color:#e4e4e4;-webkit-text-stroke:0.1px #e4e4e4">05:00f</div>
<div class="a" style="left:930.9px;top:425px;width:1px;height:2px;background:#aaa"></div>
<div class="t" style="left:951.2px;top:418px;width:40px;text-align:center;font-size:6.5px;color:#e4e4e4;-webkit-text-stroke:0.1px #e4e4e4">10f</div>
<div class="a" style="left:971.2px;top:425px;width:1px;height:2px;background:#aaa"></div>
<div class="t" style="left:991.4px;top:418px;width:40px;text-align:center;font-size:6.5px;color:#e4e4e4;-webkit-text-stroke:0.1px #e4e4e4">20f</div>
<div class="a" style="left:1011.4px;top:425px;width:1px;height:2px;background:#aaa"></div>
<div class="t" style="left:1031.6px;top:418px;width:40px;text-align:center;font-size:6.5px;color:#e4e4e4;-webkit-text-stroke:0.1px #e4e4e4">06:00f</div>
<div class="a" style="left:1051.6px;top:425px;width:1px;height:2px;background:#aaa"></div>
<div class="a" style="left:459.7px;top:417px;width:1px;height:173px;background:#3d74b8"></div>
<svg class="a" style="left:456px;top:419px" width="8" height="8"><path d="M0.5 0.5 h7 v4 l-3.5 3 l-3.5-3z" fill="#4a8ae0"/></svg>
<div class="a" style="left:1056px;top:411px;width:9px;height:179px;background:#232323"></div>
<svg class="a" style="left:1057px;top:427px" width="9" height="22"><path d="M1.5 1 h6 v5 l-3 3 l-3-3z" fill="#ddd"/><path d="M1 17 q3.5-4 7 0 q-3.5 4-7 0z" fill="#ddd"/><circle cx="4.5" cy="17" r="1.2" fill="#333"/></svg>
<div class="a" style="left:1.5px;top:589.5px;width:1063.5px;height:8.5px;background:#212121"></div>
<svg class="a" style="left:0;top:589px" width="50" height="10">
<rect x="3.5" y="1.5" width="6" height="6" rx="1" fill="#2f6fc0" stroke="#6aa0e0" stroke-width="0.7"/>
<circle cx="18.5" cy="5" r="2.5" fill="none" stroke="#aaa" stroke-width="0.9"/>
<circle cx="29.5" cy="5" r="2.5" fill="#888"/>
<rect x="38" y="3" width="6" height="4" fill="#aaa"/>
</svg>
<div class="t" style="left:60px;top:591px;font-size:6.5px;color:#c0c0c0;--w:63;transform:scaleX(0.75);transform-origin:0 0">フレームレンダリング時間</div>
<div class="t" style="left:127px;top:591.5px;font-size:5.5px;color:#3fae6a">1ms</div>
<div class="a" style="left:176px;top:590px;width:71px;height:8px;background:#2a2a2a"></div>
<div class="t" style="left:198.5px;top:591px;font-size:6.5px;color:#8a8a8a;--w:35.5;transform:scaleX(0.657);transform-origin:0 0">スイッチ / モード</div>
<svg class="a" style="left:325px;top:589px" width="60" height="10">
<path d="M3 5 h3" stroke="#bbb" stroke-width="1"/>
<path d="M16 5 h20" stroke="#444" stroke-width="1"/>
<circle cx="16" cy="5" r="2" fill="none" stroke="#bbb" stroke-width="1"/>
<path d="M44 7 l3-3 l2 2 l2-2 l3 3z" fill="#bbb"/>
</svg>
<!-- ================= effect menu ================= -->
<div class="a" style="left:150px;top:24px;width:162px;height:367px;background:#f9f9f9;border-radius:0 0 2px 2px;box-shadow:0 1px 2px rgba(0,0,0,.4)">
  <svg class="a" style="left:6px;top:4px" width="8" height="6"><path d="M1.5 3 l1.8 1.8 l3.5-3.5" fill="none" stroke="#555" stroke-width="0.9"/></svg>
  <div class="mi" style="top:5.2px;color:#1a1a1a;--w:58.7;transform:scaleX(0.683);transform-origin:0 0">エフェクトコントロール(E)</div>
  <div class="t" style="right:13px;top:5.2px;font-size:6.3px;color:#444;--w:7.5;transform:scaleX(1.071);transform-origin:100% 0;--o:right">F3</div>
  <div class="mi" style="top:17.2px;color:#1a1a1a;--w:10.5;transform:scaleX(0.75);transform-origin:0 0">塗り</div>
  <div class="t" style="right:13px;top:17.2px;font-size:6.3px;color:#333;--w:50.0;transform:scaleX(1.111);transform-origin:100% 0;--o:right">Ctrl+Alt+Shift+E</div>
  <div class="mi" style="top:29.2px;color:#b5b5b5;--w:42.0;transform:scaleX(0.824);transform-origin:0 0">すべてを削除(R)</div>
  <div class="t" style="right:13px;top:29.2px;font-size:6.3px;color:#b8b8b8;--w:36.3;transform:scaleX(1.068);transform-origin:100% 0;--o:right">Ctrl+Shift+F</div>
  <div class="a" style="left:6px;top:40px;width:150px;height:1px;background:#e2e2e2"></div>
  <div class="mi" style="top:46.2px;--w:46.1;transform:scaleX(0.744);transform-origin:0 0">エフェクトを管理...</div>
  <div class="a" style="left:6px;top:56px;width:150px;height:1px;background:#e2e2e2"></div>
  <div class="a" style="left:2.5px;top:279.8px;width:155px;height:11px;background:#ededed"></div>
  <div class="mi" style="top:63.2px;--w:34.5;transform:scaleX(0.75);transform-origin:0 0">3D チャンネル</div>
  <svg class="ar" style="top:63.0px" width="4" height="7"><path d="M0.8 1.2 L3.2 3.5 L0.8 5.8" fill="none" stroke="#333" stroke-width="1"/></svg>
  <div class="mi" style="top:75.4px;--w:45.1;transform:scaleX(0.94);transform-origin:0 0">Boris FX Mocha</div>
  <svg class="ar" style="top:75.2px" width="4" height="7"><path d="M0.8 1.2 L3.2 3.5 L0.8 5.8" fill="none" stroke="#333" stroke-width="1"/></svg>
  <div class="mi" style="top:87.6px;--w:31.2;transform:scaleX(0.918);transform-origin:0 0">Cinema 4D</div>
  <svg class="ar" style="top:87.4px" width="4" height="7"><path d="M0.8 1.2 L3.2 3.5 L0.8 5.8" fill="none" stroke="#333" stroke-width="1"/></svg>
  <div class="mi" style="top:99.8px;--w:19.8;transform:scaleX(0.943);transform-origin:0 0">Keying</div>
  <svg class="ar" style="top:99.6px" width="4" height="7"><path d="M0.8 1.2 L3.2 3.5 L0.8 5.8" fill="none" stroke="#333" stroke-width="1"/></svg>
  <div class="mi" style="top:112.0px;--w:55.5;transform:scaleX(0.925);transform-origin:0 0">NewBlue Essentials</div>
  <svg class="ar" style="top:111.8px" width="4" height="7"><path d="M0.8 1.2 L3.2 3.5 L0.8 5.8" fill="none" stroke="#333" stroke-width="1"/></svg>
  <div class="mi" style="top:124.2px;--w:26.1;transform:scaleX(0.967);transform-origin:0 0">Obsolete</div>
  <svg class="ar" style="top:124.0px" width="4" height="7"><path d="M0.8 1.2 L3.2 3.5 L0.8 5.8" fill="none" stroke="#333" stroke-width="1"/></svg>
  <div class="mi" style="top:136.4px;--w:38.8;transform:scaleX(0.693);transform-origin:0 0">イマーシブビデオ</div>
  <svg class="ar" style="top:136.2px" width="4" height="7"><path d="M0.8 1.2 L3.2 3.5 L0.8 5.8" fill="none" stroke="#333" stroke-width="1"/></svg>
  <div class="mi" style="top:148.6px;--w:56.5;transform:scaleX(0.734);transform-origin:0 0">エクスプレッション制御</div>
  <svg class="ar" style="top:148.4px" width="4" height="7"><path d="M0.8 1.2 L3.2 3.5 L0.8 5.8" fill="none" stroke="#333" stroke-width="1"/></svg>
  <div class="mi" style="top:160.8px;--w:23.0;transform:scaleX(0.657);transform-origin:0 0">オーディオ</div>
  <svg class="ar" style="top:160.6px" width="4" height="7"><path d="M0.8 1.2 L3.2 3.5 L0.8 5.8" fill="none" stroke="#333" stroke-width="1"/></svg>
  <div class="mi" style="top:173.0px;--w:26.5;transform:scaleX(0.757);transform-origin:0 0">カラー補正</div>
  <svg class="ar" style="top:172.8px" width="4" height="7"><path d="M0.8 1.2 L3.2 3.5 L0.8 5.8" fill="none" stroke="#333" stroke-width="1"/></svg>
  <div class="mi" style="top:185.2px;--w:24.5;transform:scaleX(0.7);transform-origin:0 0">キーイング</div>
  <svg class="ar" style="top:185.0px" width="4" height="7"><path d="M0.8 1.2 L3.2 3.5 L0.8 5.8" fill="none" stroke="#333" stroke-width="1"/></svg>
  <div class="mi" style="top:197.4px;--w:37.8;transform:scaleX(0.675);transform-origin:0 0">シミュレーション</div>
  <svg class="ar" style="top:197.2px" width="4" height="7"><path d="M0.8 1.2 L3.2 3.5 L0.8 5.8" fill="none" stroke="#333" stroke-width="1"/></svg>
  <div class="mi" style="top:209.6px;--w:29.5;transform:scaleX(0.702);transform-origin:0 0">スタイライズ</div>
  <svg class="ar" style="top:209.4px" width="4" height="7"><path d="M0.8 1.2 L3.2 3.5 L0.8 5.8" fill="none" stroke="#333" stroke-width="1"/></svg>
  <div class="mi" style="top:221.8px;--w:25.2;transform:scaleX(0.72);transform-origin:0 0">チャンネル</div>
  <svg class="ar" style="top:221.6px" width="4" height="7"><path d="M0.8 1.2 L3.2 3.5 L0.8 5.8" fill="none" stroke="#333" stroke-width="1"/></svg>
  <div class="mi" style="top:234.0px;--w:20.2;transform:scaleX(0.721);transform-origin:0 0">テキスト</div>
  <svg class="ar" style="top:233.8px" width="4" height="7"><path d="M0.8 1.2 L3.2 3.5 L0.8 5.8" fill="none" stroke="#333" stroke-width="1"/></svg>
  <div class="mi" style="top:246.2px;--w:36.8;transform:scaleX(0.657);transform-origin:0 0">ディストーション</div>
  <svg class="ar" style="top:246.0px" width="4" height="7"><path d="M0.8 1.2 L3.2 3.5 L0.8 5.8" fill="none" stroke="#333" stroke-width="1"/></svg>
  <div class="mi" style="top:258.4px;--w:33.5;transform:scaleX(0.684);transform-origin:0 0">トランジション</div>
  <svg class="ar" style="top:258.2px" width="4" height="7"><path d="M0.8 1.2 L3.2 3.5 L0.8 5.8" fill="none" stroke="#333" stroke-width="1"/></svg>
  <div class="mi" style="top:270.6px;--w:40.2;transform:scaleX(0.718);transform-origin:0 0">ノイズ＆グレイン</div>
  <svg class="ar" style="top:270.4px" width="4" height="7"><path d="M0.8 1.2 L3.2 3.5 L0.8 5.8" fill="none" stroke="#333" stroke-width="1"/></svg>
  <div class="mi" style="top:282.8px;--w:39.5;transform:scaleX(0.705);transform-origin:0 0">ブラー＆シャープ</div>
  <svg class="ar" style="top:282.6px" width="4" height="7"><path d="M0.8 1.2 L3.2 3.5 L0.8 5.8" fill="none" stroke="#333" stroke-width="1"/></svg>
  <div class="mi" style="top:295.0px;--w:14.2;transform:scaleX(0.676);transform-origin:0 0">マット</div>
  <svg class="ar" style="top:294.8px" width="4" height="7"><path d="M0.8 1.2 L3.2 3.5 L0.8 5.8" fill="none" stroke="#333" stroke-width="1"/></svg>
  <div class="mi" style="top:307.2px;--w:31.8;transform:scaleX(0.649);transform-origin:0 0">ユーティリティ</div>
  <svg class="ar" style="top:307.0px" width="4" height="7"><path d="M0.8 1.2 L3.2 3.5 L0.8 5.8" fill="none" stroke="#333" stroke-width="1"/></svg>
  <div class="mi" style="top:319.4px;--w:12.8;transform:scaleX(0.914);transform-origin:0 0">遠近</div>
  <svg class="ar" style="top:319.2px" width="4" height="7"><path d="M0.8 1.2 L3.2 3.5 L0.8 5.8" fill="none" stroke="#333" stroke-width="1"/></svg>
  <div class="mi" style="top:331.6px;--w:30.8;transform:scaleX(0.733);transform-origin:0 0">旧バージョン</div>
  <svg class="ar" style="top:331.4px" width="4" height="7"><path d="M0.8 1.2 L3.2 3.5 L0.8 5.8" fill="none" stroke="#333" stroke-width="1"/></svg>
  <div class="mi" style="top:343.8px;--w:12.8;transform:scaleX(0.914);transform-origin:0 0">時間</div>
  <svg class="ar" style="top:343.6px" width="4" height="7"><path d="M0.8 1.2 L3.2 3.5 L0.8 5.8" fill="none" stroke="#333" stroke-width="1"/></svg>
  <div class="mi" style="top:356.0px;--w:12.8;transform:scaleX(0.914);transform-origin:0 0">描画</div>
  <svg class="ar" style="top:355.8px" width="4" height="7"><path d="M0.8 1.2 L3.2 3.5 L0.8 5.8" fill="none" stroke="#333" stroke-width="1"/></svg>
</div>
<svg class="a" style="left:213px;top:308px" width="9" height="13"><path d="M1 1 L1 10 L3.5 7.8 L5.5 12 L7 11.3 L5 7.2 L8 7 Z" fill="#fff" stroke="#111" stroke-width="0.9"/></svg>
<script>
(function(){
  var els = document.querySelectorAll('[style*="--w"]');
  for (var i=0;i<els.length;i++){
    var el = els[i];
    var cs = getComputedStyle(el);
    var w = parseFloat(cs.getPropertyValue('--w'));
    if (!w) continue;
    var ow = el.offsetWidth;
    if (!ow) continue;
    var s = w/ow;
    if (s<0.4) s=0.4; if (s>1.6) s=1.6;
    var o = (cs.getPropertyValue('--o')||'').trim()==='right' ? '100% 0' : '0 0';
    el.style.transformOrigin = o;
    el.style.transform = 'scaleX('+s.toFixed(3)+')';
  }
})();
</script>
</body></html>
